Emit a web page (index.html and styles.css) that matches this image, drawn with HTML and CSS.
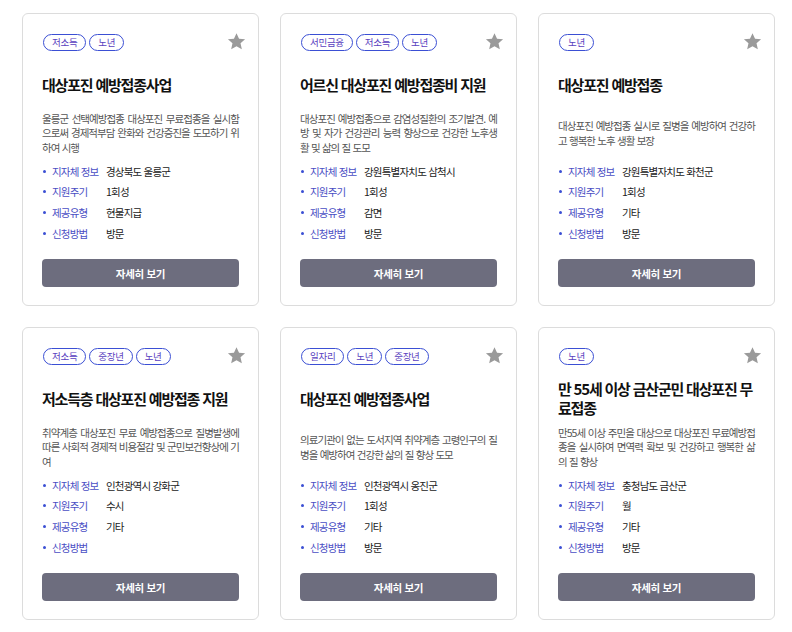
FILE: index.html
```html
<!DOCTYPE html>
<html lang="ko">
<head>
    <meta charset="utf-8">
    <title>지원 정책 목록</title>
    <link rel="stylesheet" href="styles.css">
</head>
<body>
    <div class="card-list">

        <div class="card">
            <div class="card-top">
                <div class="tags"><span class="tag">저소득</span><span class="tag">노년</span></div>
                <svg class="star" viewBox="0 0 24 24"><path d="M12 2.5l2.9 6.3 6.9.7-5.2 4.6 1.5 6.8L12 17.4l-6.1 3.5 1.5-6.8-5.2-4.6 6.9-.7z"/></svg>
            </div>
            <div class="title-box"><h2 class="title">대상포진 예방접종사업</h2></div>
            <div class="desc-box"><p class="desc">울릉군 선택예방접종 대상포진 무료접종을 실시함으로써 경제적부담 완화와 건강증진을 도모하기 위하여 시행</p></div>
            <ul class="info">
                <li><span class="label">지자체 정보</span><span class="value">경상북도 울릉군</span></li>
                <li><span class="label">지원주기</span><span class="value">1회성</span></li>
                <li><span class="label">제공유형</span><span class="value">현물지급</span></li>
                <li><span class="label">신청방법</span><span class="value">방문</span></li>
            </ul>
            <button class="more">자세히 보기</button>
        </div>

        <div class="card">
            <div class="card-top">
                <div class="tags"><span class="tag">서민금융</span><span class="tag">저소득</span><span class="tag">노년</span></div>
                <svg class="star" viewBox="0 0 24 24"><path d="M12 2.5l2.9 6.3 6.9.7-5.2 4.6 1.5 6.8L12 17.4l-6.1 3.5 1.5-6.8-5.2-4.6 6.9-.7z"/></svg>
            </div>
            <div class="title-box"><h2 class="title">어르신 대상포진 예방접종비 지원</h2></div>
            <div class="desc-box"><p class="desc">대상포진 예방접종으로 감염성질환의 조기발견. 예방 및 자가 건강관리 능력 향상으로 건강한 노후생활 및 삶의 질 도모</p></div>
            <ul class="info">
                <li><span class="label">지자체 정보</span><span class="value">강원특별자치도 삼척시</span></li>
                <li><span class="label">지원주기</span><span class="value">1회성</span></li>
                <li><span class="label">제공유형</span><span class="value">감면</span></li>
                <li><span class="label">신청방법</span><span class="value">방문</span></li>
            </ul>
            <button class="more">자세히 보기</button>
        </div>

        <div class="card">
            <div class="card-top">
                <div class="tags"><span class="tag">노년</span></div>
                <svg class="star" viewBox="0 0 24 24"><path d="M12 2.5l2.9 6.3 6.9.7-5.2 4.6 1.5 6.8L12 17.4l-6.1 3.5 1.5-6.8-5.2-4.6 6.9-.7z"/></svg>
            </div>
            <div class="title-box"><h2 class="title">대상포진 예방접종</h2></div>
            <div class="desc-box"><p class="desc">대상포진 예방접종 실시로 질병을 예방하여 건강하고 행복한 노후 생활 보장</p></div>
            <ul class="info">
                <li><span class="label">지자체 정보</span><span class="value">강원특별자치도 화천군</span></li>
                <li><span class="label">지원주기</span><span class="value">1회성</span></li>
                <li><span class="label">제공유형</span><span class="value">기타</span></li>
                <li><span class="label">신청방법</span><span class="value">방문</span></li>
            </ul>
            <button class="more">자세히 보기</button>
        </div>

        <div class="card">
            <div class="card-top">
                <div class="tags"><span class="tag">저소득</span><span class="tag">중장년</span><span class="tag">노년</span></div>
                <svg class="star" viewBox="0 0 24 24"><path d="M12 2.5l2.9 6.3 6.9.7-5.2 4.6 1.5 6.8L12 17.4l-6.1 3.5 1.5-6.8-5.2-4.6 6.9-.7z"/></svg>
            </div>
            <div class="title-box"><h2 class="title">저소득층 대상포진 예방접종 지원</h2></div>
            <div class="desc-box"><p class="desc">취약계층 대상포진 무료 예방접종으로 질병발생에 따른 사회적 경제적 비용절감 및 군민보건향상에 기여</p></div>
            <ul class="info">
                <li><span class="label">지자체 정보</span><span class="value">인천광역시 강화군</span></li>
                <li><span class="label">지원주기</span><span class="value">수시</span></li>
                <li><span class="label">제공유형</span><span class="value">기타</span></li>
                <li><span class="label">신청방법</span><span class="value"></span></li>
            </ul>
            <button class="more">자세히 보기</button>
        </div>

        <div class="card">
            <div class="card-top">
                <div class="tags"><span class="tag">일자리</span><span class="tag">노년</span><span class="tag">중장년</span></div>
                <svg class="star" viewBox="0 0 24 24"><path d="M12 2.5l2.9 6.3 6.9.7-5.2 4.6 1.5 6.8L12 17.4l-6.1 3.5 1.5-6.8-5.2-4.6 6.9-.7z"/></svg>
            </div>
            <div class="title-box"><h2 class="title">대상포진 예방접종사업</h2></div>
            <div class="desc-box"><p class="desc">의료기관이 없는 도서지역 취약계층 고령인구의 질병을 예방하여 건강한 삶의 질 향상 도모</p></div>
            <ul class="info">
                <li><span class="label">지자체 정보</span><span class="value">인천광역시 옹진군</span></li>
                <li><span class="label">지원주기</span><span class="value">1회성</span></li>
                <li><span class="label">제공유형</span><span class="value">기타</span></li>
                <li><span class="label">신청방법</span><span class="value">방문</span></li>
            </ul>
            <button class="more">자세히 보기</button>
        </div>

        <div class="card">
            <div class="card-top">
                <div class="tags"><span class="tag">노년</span></div>
                <svg class="star" viewBox="0 0 24 24"><path d="M12 2.5l2.9 6.3 6.9.7-5.2 4.6 1.5 6.8L12 17.4l-6.1 3.5 1.5-6.8-5.2-4.6 6.9-.7z"/></svg>
            </div>
            <div class="title-box"><h2 class="title">만 55세 이상 금산군민 대상포진 무료접종</h2></div>
            <div class="desc-box"><p class="desc">만55세 이상 주민을 대상으로 대상포진 무료예방접종을 실시하여 면역력 확보 및 건강하고 행복한 삶의 질 향상</p></div>
            <ul class="info">
                <li><span class="label">지자체 정보</span><span class="value">충청남도 금산군</span></li>
                <li><span class="label">지원주기</span><span class="value">월</span></li>
                <li><span class="label">제공유형</span><span class="value">기타</span></li>
                <li><span class="label">신청방법</span><span class="value">방문</span></li>
            </ul>
            <button class="more">자세히 보기</button>
        </div>

    </div>
</body>
</html>
```

FILE: styles.css
```css
body {
    margin: 0;
    background: #fff;
    font-family: "Noto Sans CJK KR", "Noto Sans", sans-serif;
    color: #222;
}

.card-list {
    display: grid;
    grid-template-columns: repeat(3, 237px);
    column-gap: 21px;
    row-gap: 21px;
    padding: 13px 0 0 22px;
}

.card {
    box-sizing: border-box;
    height: 293px;
    border: 1px solid #dcdcdc;
    border-radius: 6px;
    padding: 20px 19px 18px 19px;
    display: flex;
    flex-direction: column;
}

.card-top {
    display: flex;
    justify-content: space-between;
    align-items: flex-start;
    height: 17px;
}

.tags {
    display: flex;
    gap: 3px;
    padding-left: 1px;
}

.tag {
    box-sizing: border-box;
    height: 17px;
    line-height: 15px;
    padding: 0 8px;
    border: 1px solid #3b4fd4;
    border-radius: 9px;
    font-size: 9.5px;
    color: #5a3fc0;
    letter-spacing: -0.3px;
}

.star {
    width: 21px;
    height: 21px;
    fill: #9a9a9a;
    margin-top: -3px;
    margin-right: -8px;
}

.title-box {
    height: 46px;
    margin-top: 10px;
    display: flex;
    align-items: center;
}

.title {
    margin: 0;
    font-size: 15px;
    line-height: 19px;
    font-weight: 700;
    letter-spacing: -1.2px;
    color: #111;
    word-break: break-all;
}

.desc-box {
    height: 45px;
    margin-top: 4px;
    margin-bottom: 2px;
    display: flex;
    align-items: center;
}

.desc {
    margin: 0;
    width: 100%;
    font-size: 10.5px;
    line-height: 14.4px;
    color: #555;
    word-break: break-all;
    text-align: justify;
    letter-spacing: -0.95px;
    word-spacing: 0.25px;
}

.info {
    list-style: none;
    margin: 3px 0 0 0;
    padding: 0;
    font-size: 10.5px;
}

.info li {
    display: flex;
    align-items: center;
    height: 20.6px;
}

.info li::before {
    content: "";
    width: 3px;
    height: 3px;
    border-radius: 50%;
    background: #3b4fd4;
    margin: 0 6px 0 1px;
}

.label {
    width: 54px;
    color: #4a4ec4;
    letter-spacing: -0.8px;
}

.value {
    color: #222;
    letter-spacing: -0.8px;
}

.more {
    margin-top: auto;
    height: 28px;
    border: none;
    border-radius: 4px;
    background: #6d6d7e;
    color: #fff;
    font-family: inherit;
    font-size: 10.5px;
    font-weight: 700;
    letter-spacing: -0.3px;
    cursor: pointer;
}

.more:hover {
    background: #5c5c6c;
}
```
